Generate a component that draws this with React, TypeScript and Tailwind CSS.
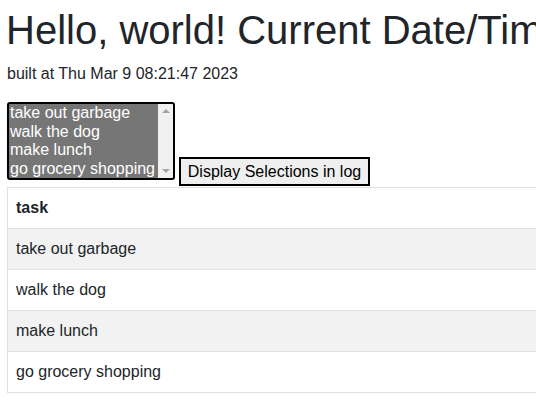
const tasks = ['take out garbage', 'walk the dog', 'make lunch', 'go grocery shopping'];

function FakeSelect() {
  return (
    <div className="flex h-[78px] w-[168px] overflow-hidden rounded-[3px] border-2 border-black bg-[#767676]">
      <div className="flex-1 pl-[1px] text-white">
        {tasks.map((t) => (
          <div key={t} className="whitespace-nowrap leading-[18.5px]">
            {t}
          </div>
        ))}
      </div>
      {/* scrollbar */}
      <div className="flex w-[15px] flex-col items-center justify-between bg-[#f1f1f1] py-[5px]">
        <div className="h-0 w-0 border-x-[4px] border-b-[4px] border-x-transparent border-b-[#a3a3a3]" />
        <div className="h-0 w-0 border-x-[4px] border-t-[4px] border-x-transparent border-t-[#a3a3a3]" />
      </div>
    </div>
  );
}

export default function App() {
  return (
    <div className="h-[404px] w-[536px] overflow-hidden bg-white font-['Liberation_Sans',Arial,sans-serif] text-[16px] leading-6 text-[#212529]">
      <div className="pl-[7px]">
        <h1 className="mt-[6px] mb-2 -ml-[1px] whitespace-nowrap text-[40px] leading-[48px] font-normal">
          Hello, world! Current Date/Time Example
        </h1>
        <p className="mb-4">built at Thu Mar 9 08:21:47 2023</p>

        <div className="flex items-end gap-[4px]">
          <div className="mb-[6px]">
            <FakeSelect />
          </div>
          <button className="h-[29px] w-[191px] border-2 border-black bg-[#efefef] px-[6px] text-[16px] leading-[24px] text-black">
            Display Selections in log
          </button>
        </div>

        <table className="mt-[1px] w-[700px] border-collapse border border-[#dee2e6]">
          <thead>
            <tr>
              <th className="border-b border-[#dee2e6] p-2 text-left font-bold">task</th>
            </tr>
          </thead>
          <tbody>
            {tasks.map((t, i) => (
              <tr key={t} className={i % 2 === 0 ? 'bg-[#f2f2f2]' : 'bg-white'}>
                <td className="border-b border-[#dee2e6] p-2">{t}</td>
              </tr>
            ))}
          </tbody>
        </table>
      </div>
    </div>
  );
}
